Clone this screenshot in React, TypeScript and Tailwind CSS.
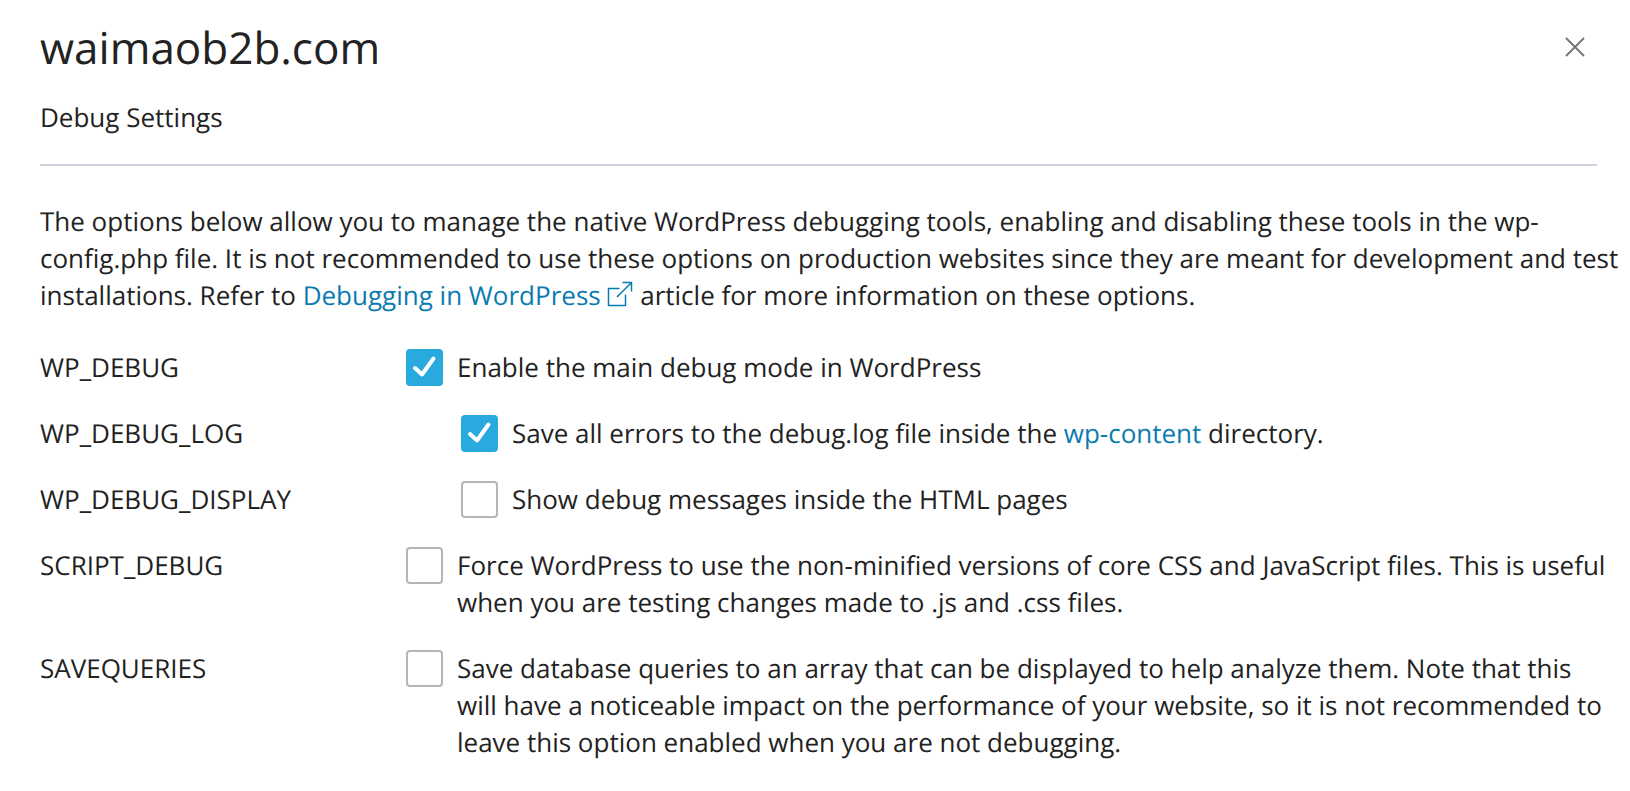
import { useState } from "react";
import type { ReactNode } from "react";

type Option = { id: string; nested: boolean; checked: boolean; text: ReactNode };

const options: Option[] = [
  { id: "WP_DEBUG", nested: false, checked: true, text: "Enable the main debug mode in WordPress" },
  {
    id: "WP_DEBUG_LOG",
    nested: true,
    checked: true,
    text: (
      <>
        Save all errors to the debug.log file inside the{" "}
        <a href="#wp-content" className="text-[#0a7bb0]">wp-content</a> directory.
      </>
    ),
  },
  { id: "WP_DEBUG_DISPLAY", nested: true, checked: false, text: "Show debug messages inside the HTML pages" },
  {
    id: "SCRIPT_DEBUG",
    nested: false,
    checked: false,
    text: "Force WordPress to use the non-minified versions of core CSS and JavaScript files. This is useful when you are testing changes made to .js and .css files.",
  },
  {
    id: "SAVEQUERIES",
    nested: false,
    checked: false,
    text: "Save database queries to an array that can be displayed to help analyze them. Note that this will have a noticeable impact on the performance of your website, so it is not recommended to leave this option enabled when you are not debugging.",
  },
];

function OptionRow({ option }: { option: Option }) {
  const [checked, setChecked] = useState(option.checked);
  return (
    <div className="flex">
      <label htmlFor={option.id} className="w-[366px] shrink-0">{option.id}</label>
      <div className={option.nested ? "flex flex-1 gap-3.5 pl-[55px]" : "flex flex-1 gap-3.5"}>
        <span className="grid size-[37px] shrink-0 place-items-center">
          <input
            id={option.id}
            type="checkbox"
            checked={checked}
            onChange={(e) => setChecked(e.target.checked)}
            aria-describedby={option.id + "-text"}
            className="peer col-start-1 row-start-1 size-[37px] appearance-none rounded-[4px] border-2 border-[#b5b5b5] bg-white checked:border-[#28aade] checked:bg-[#28aade]"
          />
          <svg viewBox="0 0 37 37" className="pointer-events-none invisible col-start-1 row-start-1 size-[37px] peer-checked:visible" fill="none" stroke="white" strokeWidth="4">
            <path d="M9 19 L16 25.5 L27.5 9.5" strokeLinecap="round" strokeLinejoin="round" />
          </svg>
        </span>
        <span id={option.id + "-text"}>{option.text}</span>
      </div>
    </div>
  );
}

export default function App() {
  return (
    <main className="bg-white pt-[15px] pb-8 pl-10 font-['Open_Sans',sans-serif] text-[26px] leading-[37px] text-[#222222] [text-rendering:geometricPrecision]">
      <header className="mr-[33px] border-b-2 border-[#d0d2e0] pb-7">
        <div className="flex items-center justify-between pr-3">
          <h1 className="text-[44px] leading-[64px]">waimaob2b.com</h1>
          <button type="button" aria-label="Close" className="text-[#737373]">
            <svg viewBox="0 0 20 20" className="size-5" fill="none" stroke="currentColor" strokeWidth="1.8">
              <path d="M1 1 L19 19 M19 1 L1 19" />
            </svg>
          </button>
        </div>
        <p className="mt-5">Debug Settings</p>
      </header>
      <p className="mt-[37px] pr-2">
        The options below allow you to manage the native WordPress debugging tools, enabling and disabling these tools in the wp-config.php file. It is not recommended to use these options on production websites since they are meant for development and test installations. Refer to{" "}
        <a href="#debugging" className="text-[#0a7bb0]">
          Debugging in WordPress{" "}
          <svg viewBox="0 0 26 26" className="inline size-[26px] align-[-2px]" fill="none" stroke="currentColor" strokeWidth="1.5">
            <path d="M12.5 7.5 H1.5 V24.5 H18.5 V13.5 M10 16 L24 2 M15.5 1.5 H24.5 V10.5" />
          </svg>
        </a>{" "}
        article for more information on these options.
      </p>
      <div className="mt-[35px] flex flex-col gap-[29px] pr-5">
        {options.map((option) => (
          <OptionRow key={option.id} option={option} />
        ))}
      </div>
    </main>
  );
}
